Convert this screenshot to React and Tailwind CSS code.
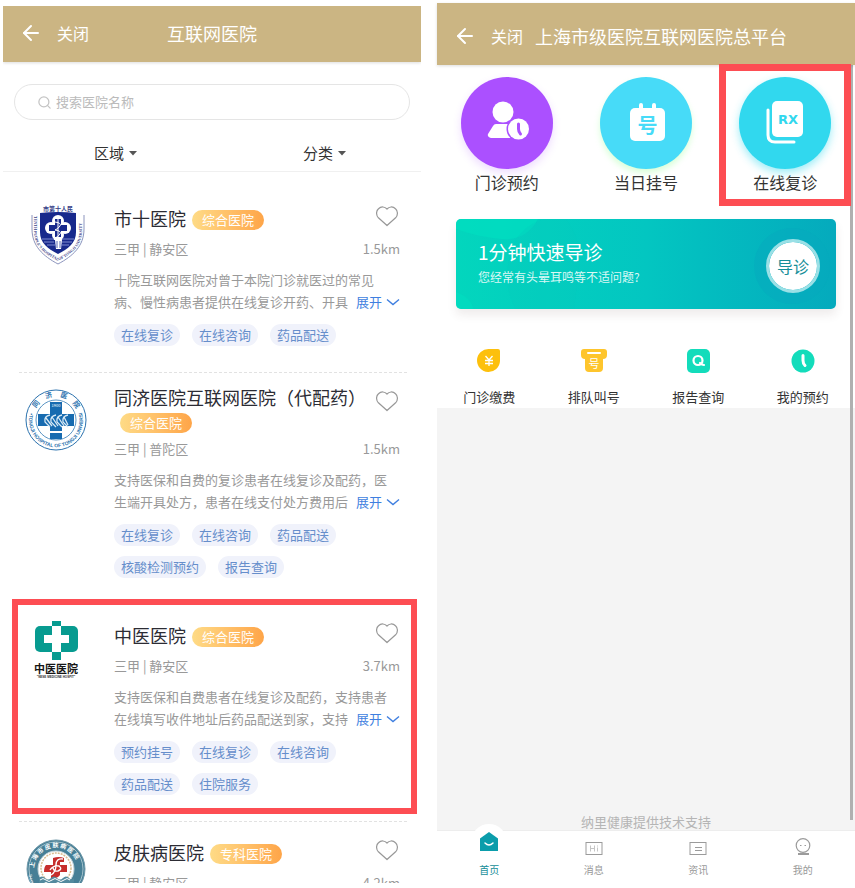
import { ArrowLeft, Search } from 'lucide-react';

const hospitals = [
  {
    id: 1,
    name: '市十医院',
    type: '综合医院',
    area: '三甲 | 静安区',
    distance: '1.5km',
    intro: ['十院互联网医院对曾于本院门诊就医过的常见', '病、慢性病患者提供在线复诊开药、开具'],
    tags: ['在线复诊', '在线咨询', '药品配送'],
    Logo: ShieldLogo,
  },
  {
    id: 2,
    name: '同济医院互联网医院（代配药）',
    type: '综合医院',
    area: '三甲 | 普陀区',
    distance: '1.5km',
    intro: ['支持医保和自费的复诊患者在线复诊及配药，医', '生端开具处方，患者在线支付处方费用后'],
    tags: ['在线复诊', '在线咨询', '药品配送', '核酸检测预约', '报告查询'],
    Logo: TongjiLogo,
    longName: true,
  },
  {
    id: 3,
    name: '中医医院',
    type: '综合医院',
    area: '三甲 | 静安区',
    distance: '3.7km',
    intro: ['支持医保和自费患者在线复诊及配药，支持患者', '在线填写收件地址后药品配送到家，支持'],
    tags: ['预约挂号', '在线复诊', '在线咨询', '药品配送', '住院服务'],
    Logo: TcmLogo,
    marked: true,
  },
  {
    id: 4,
    name: '皮肤病医院',
    type: '专科医院',
    area: '三甲 | 静安区',
    distance: '4.2km',
    intro: [],
    tags: [],
    Logo: SkinLogo,
  },
];

const services = [
  { name: '门诊预约', Icon: AppointmentIcon, style: 'bg-[#ab50ff] shadow-[0_4px_8px_#ab50ff33]' },
  { name: '当日挂号', Icon: RegisterIcon, style: 'bg-[#47dbf8] shadow-[0_4px_6px_#8dff8d55]' },
  { name: '在线复诊', Icon: RxIcon, style: 'bg-[#31d8ee] shadow-[0_4px_8px_#31d8ee77]', marked: true },
];

const shortcuts = [
  { name: '门诊缴费', Icon: PayIcon },
  { name: '排队叫号', Icon: QueueIcon },
  { name: '报告查询', Icon: ReportIcon },
  { name: '我的预约', Icon: ClockIcon },
];

const tabs = [
  { name: '首页', Icon: HomeIcon, active: true },
  { name: '消息', Icon: MessageIcon },
  { name: '资讯', Icon: NewsIcon },
  { name: '我的', Icon: MineIcon },
];

function ShieldLogo() {
  return (
    <svg viewBox="0 0 62 62" className="h-[62px] w-[62px] overflow-visible">
      <defs>
        <path id="shield-edge" d="M9 12 V27 C9 43 20 50 33 57 C46 50 57 43 57 27 V8" />
      </defs>
      <text x="33" y="7" textAnchor="middle" fontSize="6" fontWeight="700" fill="#333c86">市第十人民</text>
      <path d="M7 11 V25 C7 42 18 52 33 60 C48 52 59 42 59 25 V11" fill="none" stroke="#8c94bd" strokeWidth="1" />
      <text fontSize="4" fontWeight="700" fill="#3a4288" fontFamily="Liberation Serif, serif">
        <textPath href="#shield-edge">TENTH PEOPLE'S HOSPITAL OF TONGJI UNIVERSITY</textPath>
      </text>
      <path d="M15 9 Q33 7 51 9 V28 C51 39 43 45 33 50 C23 45 15 39 15 28 Z" fill="#18298c" />
      <g fill="#fff">
        <circle cx="33" cy="17" r="6" />
        <circle cx="33" cy="31" r="6" />
        <circle cx="26" cy="24" r="6" />
        <circle cx="40" cy="24" r="6" />
        <path d="M30 36h7l-1 9h-5z" />
      </g>
      <path d="M30 15h6v6h6v6h-6v6h-6v-6h-6v-6h6z" fill="#18298c" />
      <path d="M33 14v29M30 18q7 1 5 4t-5 4q7 1 5 4t-5 4" fill="none" stroke="#fff" strokeWidth="1" />
      <path d="M17 35h12M37 35h12M19 38h10M37 38h10M22 41h8M36 41h8" stroke="#7f8bd0" strokeWidth="1" />
      <path d="M32 37v7M35 37v7" stroke="#5968b8" strokeWidth="1" />
    </svg>
  );
}

function TongjiLogo() {
  return (
    <svg viewBox="0 0 62 62" className="h-[62px] w-[62px] overflow-visible">
      <defs>
        <path id="tongji-top" d="M9 24 A23 23 0 0 1 53 24" />
        <path id="tongji-bottom" d="M5 24 A27 27 0 1 0 57 24" />
      </defs>
      <circle cx="31" cy="31" r="30" fill="#fff" stroke="#2b72ae" strokeWidth="1" />
      <circle cx="31" cy="31" r="20" fill="none" stroke="#5b95c4" strokeWidth="1" />
      <text fontSize="7" fill="#2b72ae" fontWeight="700">
        <textPath href="#tongji-top" startOffset="5">同　济　医　院</textPath>
      </text>
      <text fontSize="5" fill="#2b72ae" fontWeight="700" fontFamily="Liberation Sans, sans-serif">
        <textPath href="#tongji-bottom">•TONGJI HOSPITAL OF TONGJI UNIVERSITY•</textPath>
      </text>
      <path d="M25 13h12v12h12v12H37v13H25V37H13V25h12z" fill="#176bb0" />
      <text x="31" y="18" textAnchor="middle" fontSize="4" fill="#fff">1900</text>
      <g fill="none" stroke="#d8e9f5" strokeWidth="1.3">
        <path d="M25 26q-6 1-5 7l5 5M31 26q-6 1-5 7l5 5M37 26q-6 1-5 7l5 5M43 26q-6 1-5 7l5 5" />
        <path d="M21 29l6 8M27 28l6 9M33 28l6 9M39 28l4 8" />
      </g>
      <path d="M25 43h12" stroke="#fff" strokeWidth="2" />
    </svg>
  );
}

function TcmLogo() {
  return (
    <svg viewBox="0 0 62 62" className="h-[62px] w-[62px] overflow-visible">
      <rect x="10" y="5" width="43" height="26" rx="5" fill="#079b90" />
      <path d="M27 0h9v6h-9zM27 31h9v8h-9z" fill="#079b90" />
      <path d="M27 5h9v9h8v8h-8v9h-9v-9h-8v-8h8z" fill="#fff" />
      <text x="31" y="52" textAnchor="middle" fontSize="11" fontWeight="700" fill="#161616">中医医院</text>
      <text x="31" y="57" textAnchor="middle" fontSize="3" fontWeight="700" fill="#333" fontFamily="Liberation Sans, sans-serif">
        "NESE MEDICINE HOSPIT"
      </text>
    </svg>
  );
}

function SkinLogo() {
  return (
    <svg viewBox="0 0 62 62" className="h-[62px] w-[62px] overflow-visible">
      <defs>
        <path id="skin-top" d="M10 38 A22 22 0 1 1 52 38" />
        <path id="skin-bottom" d="M4 36 A27 27 0 0 0 58 36" />
      </defs>
      <circle cx="31" cy="31" r="29" fill="#467f96" stroke="#6f98a8" strokeWidth="1" />
      <circle cx="31" cy="31" r="27" fill="none" stroke="#a5c2cc" strokeWidth="1" />
      <circle cx="31" cy="31" r="18" fill="#fff" stroke="#c3d3d7" strokeWidth="1" />
      <text fontSize="6" fill="#fff" fontWeight="700">
        <textPath href="#skin-top" startOffset="8">上 海 市 皮 肤 病 医 院</textPath>
      </text>
      <text fontSize="4" fill="#fff" fontFamily="Liberation Sans, sans-serif">
        <textPath href="#skin-bottom">SHANGHAI SKIN DISEASE HOSPITAL</textPath>
      </text>
      <circle cx="31" cy="30" r="15" fill="none" stroke="#d8bd91" strokeWidth="1.5" strokeDasharray="2 1" />
      <path d="M28 20q6-2 11 0v4h-4v3h7v7h-7v3q-3 4-9 3v-6h-7q0-5 2-7h7z" fill="#c62e2c" />
      <path d="M38 21q-7-1-7 6t-5 10M25 32q3-5 9-4q4 3-1 5q-5 1-5-4" fill="none" stroke="#fff" strokeWidth="1.4" />
      <path d="M14 40q3-3 6 0t6 0 6 0 6 0 6 0 5 0v4q-7 8-18 8t-17-8z" fill="#538a9e" />
      <path d="M15 42q3-3 6 0t6 0 6 0 6 0 6 0M18 46q3-3 6 0t6 0 6 0 6 0" fill="none" stroke="#fff" strokeWidth="1" />
    </svg>
  );
}

function HeartIcon() {
  return (
    <svg viewBox="0 0 24 21" className="h-[21px] w-6" fill="none" stroke="#989898" strokeWidth="1.2" strokeLinejoin="round">
      <path d="M11 19.5 L2.4 11.8 C-0.2 9 0.1 4.7 2.5 2.7 C5.3 0 8.9 0.7 11 3 C13.1 0.7 16.7 0 19.5 2.7 C21.9 4.7 22.2 9 19.6 11.8 Z" />
    </svg>
  );
}

function ChevronIcon() {
  return (
    <svg viewBox="0 0 14 14" className="h-[14px] w-[14px]" fill="none" stroke="currentColor" strokeWidth="1.4">
      <path d="M1 4.500l6 5 6-5" />
    </svg>
  );
}

function AppointmentIcon() {
  return (
    <svg viewBox="0 0 92 92" className="h-full w-full">
      <circle cx="42" cy="35" r="10.5" fill="#fff" />
      <path d="M35 47h18l1 14H30q-4-1-3-4l5-8q1-2 3-2z" fill="#fff" />
      <circle cx="57.5" cy="52" r="12" fill="#ab50ff" />
      <circle cx="57.5" cy="52" r="10.5" fill="#fff" />
      <path d="M57.5 47v5q0 3 2 5" fill="none" stroke="#ab50ff" strokeWidth="3" strokeLinecap="round" />
    </svg>
  );
}

function RegisterIcon() {
  return (
    <svg viewBox="0 0 92 92" className="h-full w-full">
      <path d="M41 28v6M54 28v6" stroke="#fff" strokeWidth="4" strokeLinecap="round" />
      <rect x="30" y="31" width="35" height="33" rx="5" fill="#fff" />
      <text x="47.5" y="56" textAnchor="middle" fontSize="20" fontWeight="700" fill="#47dbf8">号</text>
    </svg>
  );
}

function RxIcon() {
  return (
    <svg viewBox="0 0 92 92" className="h-full w-full">
      <rect x="33" y="24" width="31" height="36" rx="5" fill="#fff" />
      <path d="M29 33v25q0 7 7 7h19" fill="none" stroke="#fff" strokeWidth="3" strokeLinecap="round" />
      <text x="49" y="47" textAnchor="middle" fontSize="13" fontWeight="700" fill="#31d8ee" fontFamily="DejaVu Sans, sans-serif">RX</text>
    </svg>
  );
}

function PayIcon() {
  return (
    <svg viewBox="0 0 26 26" className="h-[26px] w-[26px]">
      <path d="M13 1h9q2 0 2 2v10A11.5 11.5 0 1 1 13 1z" fill="#fdc00c" />
      <path d="M9.5 8l3.5 4 3.5-4M13 12v6M9 12.5h8M9 15.5h8" fill="none" stroke="#fff" strokeWidth="1.3" />
    </svg>
  );
}

function QueueIcon() {
  return (
    <svg viewBox="0 0 26 26" className="h-[26px] w-[26px]">
      <path d="M3 1h20q3 0 3 3v3q0 4-4 4v9q0 4-4 4H8q-4 0-4-4v-9q-4 0-4-4V4q0-3 3-3z" fill="#fec52c" />
      <path d="M7 5h12" stroke="#fff" strokeWidth="2" strokeLinecap="round" />
      <text x="13" y="20" textAnchor="middle" fontSize="11" fill="#fff">号</text>
    </svg>
  );
}

function ReportIcon() {
  return (
    <svg viewBox="0 0 26 26" className="h-[26px] w-[26px]">
      <rect x="2" y="1" width="23" height="24" rx="5" fill="#13dcbb" />
      <circle cx="13" cy="12.5" r="4.5" fill="none" stroke="#fff" strokeWidth="2.2" />
      <path d="M15 15q2 2 4 2" fill="none" stroke="#fff" strokeWidth="2.2" strokeLinecap="round" />
    </svg>
  );
}

function ClockIcon() {
  return (
    <svg viewBox="0 0 26 26" className="h-[26px] w-[26px]">
      <circle cx="13" cy="13" r="11.5" fill="#13dcbb" />
      <path d="M13 7.5v5q0 3 2 5" fill="none" stroke="#fff" strokeWidth="3" strokeLinecap="round" />
    </svg>
  );
}

function HomeIcon() {
  return (
    <svg viewBox="0 0 20 20" className="h-5 w-5">
      <path d="M1 6.5L10 0l9 6.5V19H1z" fill="#0b9dab" />
      <path d="M6 11q4 4 8 0" fill="none" stroke="#fff" strokeWidth="1.5" strokeLinecap="round" />
    </svg>
  );
}

function MessageIcon() {
  return (
    <svg viewBox="0 0 20 20" className="h-5 w-5">
      <rect x="2" y="4.5" width="16" height="12" fill="none" stroke="#9b9b9b" />
      <path d="M6.5 7.5v6M10.5 7.5v6M6.5 10.5h4M13.5 9.5v4M13.5 7.5v1" stroke="#c5c5c5" />
    </svg>
  );
}

function NewsIcon() {
  return (
    <svg viewBox="0 0 20 20" className="h-5 w-5">
      <rect x="2" y="4.5" width="16" height="12" fill="none" stroke="#9b9b9b" />
      <path d="M7 9.5h7M7 12.5h7" stroke="#9b9b9b" />
    </svg>
  );
}

function MineIcon() {
  return (
    <svg viewBox="0 0 20 20" className="h-5 w-5">
      <circle cx="10" cy="7.5" r="6.8" fill="none" stroke="#9b9b9b" strokeWidth="1.2" />
      <path d="M5 16h11" stroke="#9b9b9b" strokeWidth="2" />
      <path d="M7 7.5h1.5M11.5 7.5h1.5" stroke="#9b9b9b" />
    </svg>
  );
}

function Filter({ id, label }) {
  return (
    <div className="flex items-center justify-center pl-4">
      <label htmlFor={id} className="sr-only">{label}</label>
      <div className="flex items-center gap-1">
        <select id={id} className="h-7 appearance-none bg-transparent text-[15px] text-[#333]">
          <option>{label}</option>
        </select>
        <svg viewBox="0 0 8 6" className="h-[6px] w-2">
          <path d="M0 1h8L4 5.5z" fill="#555" />
        </svg>
      </div>
    </div>
  );
}

function HospitalCard({ hospital }) {
  const { name, type, area, distance, intro, tags, Logo, longName, marked } = hospital;

  return (
    <article className="relative flex border-b border-dashed border-[#e2e2e2] pr-[7px] pb-[26px]">
      <div className="w-[95px] shrink-0 pt-4 pl-[6px]">
        <Logo />
      </div>
      <div className="min-w-0 flex-1">
        <div className="flex items-start justify-between">
          <div className={longName ? 'pt-3 leading-6' : 'pt-[18px] leading-6'}>
            <h2 className="inline text-lg leading-6 text-[#2c2c34]">{name}</h2>
            <span className="ml-[6px] inline-block rounded-full bg-gradient-to-r from-[#fedb86] to-[#fea548] px-[10px] align-[1px] text-[13px] leading-5 text-white">
              {type}
            </span>
          </div>
          <button aria-label="收藏" className="shrink-0 pt-[18px]">
            <HeartIcon />
          </button>
        </div>
        <div className={`flex justify-between text-[13px] leading-5 text-[#999] ${longName ? 'mt-[5px]' : 'mt-2'}`}>
          <span>{area}</span>
          <span>{distance}</span>
        </div>
        {intro.length > 0 && (
          <div className="mt-[10px] text-[13px] leading-[22px] text-[#999]">
            <p>{intro[0]}</p>
            <div className="flex items-center justify-between">
              <p>{intro[1]}</p>
              <button className="flex shrink-0 items-center gap-1 text-[13px] text-[#3f7fe0]">
                展开
                <ChevronIcon />
              </button>
            </div>
          </div>
        )}
        {tags.length > 0 && (
          <ul className="mt-[11px] flex flex-wrap gap-x-3 gap-y-[10px]">
            {tags.map((tag) => (
              <li key={tag} className="rounded-full bg-[#f0f2fb] px-[7px] text-[13px] leading-[22px] text-[#668ecb]">
                {tag}
              </li>
            ))}
          </ul>
        )}
      </div>
      {marked && (
        <div className="pointer-events-none absolute -top-[6px] -right-[10px] bottom-[7px] -left-[7px] border-[6px] border-[#fd4d53]" />
      )}
    </article>
  );
}

function HospitalList() {
  return (
    <section className="mt-[6px] flex min-w-0 flex-1 flex-col overflow-hidden">
      <header className="z-10 grid shrink-0 grid-cols-[1fr_auto_1fr] items-center bg-[#cbb583] px-4 pt-[13px] pb-[15px] leading-7 text-white shadow-[0_1px_3px_#0002]">
        <div className="flex items-center gap-[14px]">
          <button aria-label="返回"><ArrowLeft className="h-6 w-6" strokeWidth={2} /></button>
          <button className="text-base">关闭</button>
        </div>
        <h1 className="text-lg">互联网医院</h1>
      </header>

      {/* Search */}
      <div className="mx-[11px] mt-[22px] flex h-9 shrink-0 items-center gap-1 rounded-full border border-[#e5e5e5] px-[22px]">
        <Search className="h-[15px] w-[15px] shrink-0 text-[#c4c4c4]" strokeWidth={2} />
        <input
          type="text"
          aria-label="搜索医院名称"
          placeholder="搜索医院名称"
          className="min-w-0 flex-1 text-[13px] outline-none placeholder:text-[#bbb]"
        />
      </div>

      {/* Filters */}
      <div className="mt-[19px] grid shrink-0 grid-cols-2 border-b border-[#f0f0f0] pb-1">
        <Filter id="area" label="区域" />
        <Filter id="category" label="分类" />
      </div>

      <div className="min-h-0 flex-1 overflow-hidden pt-4 pr-[14px] pl-4">
        {hospitals.map((hospital) => (
          <HospitalCard key={hospital.id} hospital={hospital} />
        ))}
      </div>
    </section>
  );
}

function Platform() {
  return (
    <section className="mt-[3px] flex min-w-0 flex-1 flex-col">
      <header className="z-10 flex shrink-0 items-center bg-[#cbb583] px-4 pt-[19px] pb-[15px] leading-7 text-white shadow-[0_1px_3px_#0002]">
        <button aria-label="返回"><ArrowLeft className="h-6 w-6" strokeWidth={2} /></button>
        <button className="ml-[14px] text-base">关闭</button>
        <h1 className="ml-3 text-lg leading-7 whitespace-nowrap">上海市级医院互联网医院总平台</h1>
      </header>

      <div className="relative flex min-h-0 flex-1 flex-col">
        <div className="absolute top-0 right-[2px] bottom-[10px] w-[3px] bg-[#b0b0b0]" />
        {/* Main services */}
        <div className="relative z-20 grid grid-cols-3">
          {services.map(({ name, Icon, style, marked }) => (
            <a key={name} href="#" className="relative flex flex-col items-center pt-3 pb-[25px] text-base text-[#333]">
              <span className={`h-[92px] w-[92px] rounded-full ${style}`}>
                <Icon />
              </span>
              <span className="mt-px leading-6">{name}</span>
              {marked && <span className="absolute -top-px right-1 bottom-[13px] left-[3px] border-[7px] border-[#fd4d53]" />}
            </a>
          ))}
        </div>

        {/* Triage banner */}
        <div className="relative mx-[19px] flex items-center justify-between rounded-[5px] bg-gradient-to-r from-[#03d6bd] via-[#03c6c1] to-[#05aabd] pr-4 pl-[22px] text-white shadow-[0_6px_10px_#50303018]">
          <svg viewBox="0 0 380 90" preserveAspectRatio="none" className="absolute inset-0 h-full w-full rounded-[5px]">
            <path d="M0 0h82q-12 22-36 20T0 10z" fill="#02dec0" opacity="0.7" />
            <path d="M60 20q15-20 35-20h15q16 20 13 48l-5 42H60q-18-30 0-70z" fill="#06cabd" opacity="0.3" />
            <circle cx="336" cy="47" r="38" fill="#05aabd" opacity="0.5" />
            <path d="M0 73q16 6 17 17H0z" fill="#02dec0" opacity="0.6" />
          </svg>
          <div className="relative pt-[19px] pb-[21px]">
            <h2 className="text-[19px] leading-7">1分钟快速导诊</h2>
            <p className="text-xs leading-[22px] text-[#d9f8f5]">您经常有头晕耳鸣等不适问题?</p>
          </div>
          <button className="relative mt-1 h-[54px] w-[54px] rounded-full border-[3px] border-[#9ae0e6] bg-white bg-clip-padding text-base text-[#168e98]">
            导诊
          </button>
        </div>

        {/* Shortcuts */}
        <div className="grid grid-cols-4 pt-[39px]">
          {shortcuts.map(({ name, Icon }) => (
            <a key={name} href="#" className="flex flex-col items-center pb-px text-[13px] text-[#333]">
              <Icon />
              <span className="mt-[13px] leading-5">{name}</span>
            </a>
          ))}
        </div>

        <div className="-z-10 flex flex-1 items-end justify-center bg-[#f4f4f4] text-[13px] leading-4 text-[#b5b5b5]">
          纳里健康提供技术支持
        </div>
      </div>

      {/* Tab bar */}
      <nav className="grid shrink-0 grid-cols-4 border-t border-[#ededed] bg-white pb-[5px]">
        {tabs.map(({ name, Icon, active }) => (
          <a
            key={name}
            href="#"
            className={`relative flex flex-col items-center text-[10px] leading-4 ${active ? 'text-[#168e98]' : 'text-[#999]'}`}
          >
            {active && <span className="absolute -top-[7px] h-9 w-9 rounded-full bg-white" />}
            <span className={active ? 'relative pt-px pb-[10px]' : 'relative pt-[7px] pb-1'}>
              <Icon />
            </span>
            <span className="relative">{name}</span>
          </a>
        ))}
      </nav>
    </section>
  );
}

export default function App() {
  return (
    <main className="isolate flex h-screen gap-4 bg-white pb-[5px] pl-[3px] font-['Noto_Sans_CJK_SC',sans-serif]">
      <HospitalList />
      <Platform />
    </main>
  );
}
